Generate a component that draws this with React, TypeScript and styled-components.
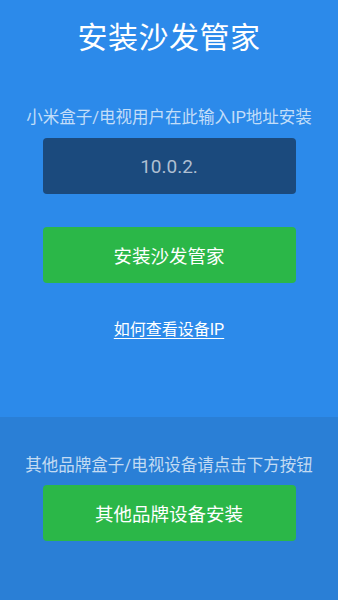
import styled, { createGlobalStyle } from "styled-components";

const GlobalStyle = createGlobalStyle`
  html, body {
    margin: 0;
    padding: 0;
  }
  body {
    font-family: Roboto, "Noto Sans CJK SC", sans-serif;
  }
`;

const Page = styled.div`
  width: 338px;
  height: 600px;
  display: flex;
  flex-direction: column;
  overflow: hidden;
`;

const Section = styled.section<{ $dark?: boolean }>`
  display: flex;
  flex-direction: column;
  align-items: center;
  background: ${(p) => (p.$dark ? "#2a7fd6" : "#2c8aea")};
  height: ${(p) => (p.$dark ? "183px" : "417px")};
  box-sizing: border-box;
  padding-top: ${(p) => (p.$dark ? "37px" : "18px")};
`;

const Title = styled.h1`
  margin: 0;
  font-size: 30px;
  font-weight: 400;
  line-height: 40px;
  color: #ffffff;
  letter-spacing: 0.5px;
`;

const Hint = styled.p<{ $top: number }>`
  margin: ${(p) => p.$top}px 0 0;
  font-size: 16.5px;
  line-height: 24px;
  color: rgba(255, 255, 255, 0.72);
  white-space: nowrap;
`;

const IpInput = styled.input`
  margin-top: 8px;
  width: 253px;
  height: 56px;
  box-sizing: border-box;
  border: none;
  border-radius: 4px;
  background: #1b4a7d;
  color: #aebfd2;
  font-family: Roboto, "Noto Sans CJK SC", sans-serif;
  font-size: 19px;
  text-align: center;
  outline: none;
`;

const GreenButton = styled.button<{ $top: number }>`
  margin-top: ${(p) => p.$top}px;
  width: 253px;
  height: 56px;
  border: none;
  border-radius: 4px;
  background: #2bb748;
  color: #ffffff;
  font-family: Roboto, "Noto Sans CJK SC", sans-serif;
  font-size: 18.5px;
  cursor: pointer;
`;

const HelpLink = styled.a`
  margin-top: 36px;
  font-size: 16px;
  line-height: 22px;
  color: #ffffff;
  text-decoration: underline;
  text-underline-offset: 3px;
`;

export default function App() {
  return (
    <Page>
      <GlobalStyle />
      <Section>
        <Title>安装沙发管家</Title>
        <Hint $top={48}>小米盒子/电视用户在此输入IP地址安装</Hint>
        <IpInput defaultValue="10.0.2." />
        <GreenButton $top={33}>安装沙发管家</GreenButton>
        <HelpLink href="#">如何查看设备IP</HelpLink>
      </Section>
      <Section $dark>
        <Hint $top={0}>其他品牌盒子/电视设备请点击下方按钮</Hint>
        <GreenButton $top={7}>其他品牌设备安装</GreenButton>
      </Section>
    </Page>
  );
}
